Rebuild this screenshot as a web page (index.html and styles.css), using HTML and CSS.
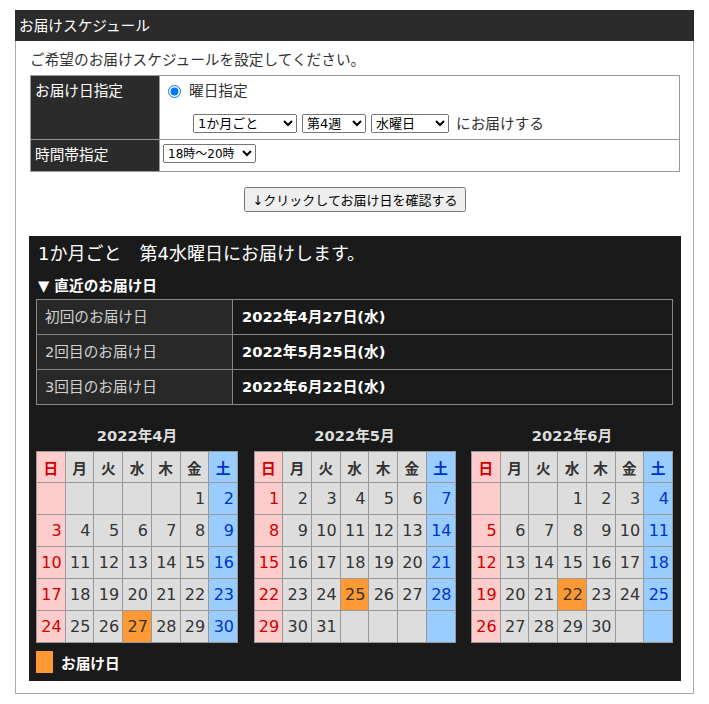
FILE: index.html
```html
<!DOCTYPE html>
<html lang="ja">
<head>
    <meta charset="UTF-8">
    <meta name="viewport" content="width=device-width, initial-scale=1.0">
    <title>お届けスケジュール</title>
    <link rel="stylesheet" href="styles.css">
</head>
<body>
    <div class="schedule">
        <div class="schedule-head">お届けスケジュール</div>
        <div class="schedule-body">
            <p class="lead">ご希望のお届けスケジュールを設定してください。</p>
            <table class="form-table">
                <tr>
                    <th>お届け日指定</th>
                    <td class="first-cell">
                        <label class="radio-line"><input type="radio" name="type" checked>曜日指定</label>
                        <div class="week-line">
                            <select class="sel-cycle"><option>1か月ごと</option></select>
                            <select class="sel-week"><option>第4週</option></select>
                            <select class="sel-day"><option>水曜日</option></select>
                            <span class="week-text">にお届けする</span>
                        </div>
                    </td>
                </tr>
                <tr>
                    <th>時間帯指定</th>
                    <td class="time-cell"><select class="sel-time"><option>18時～20時</option></select></td>
                </tr>
            </table>
            <button class="check-btn">↓クリックしてお届け日を確認する</button>

            <div class="result">
                <h2 class="result-title">1か月ごと　第4水曜日にお届けします。</h2>
                <p class="recent">▼ 直近のお届け日</p>
                <table class="dates-table">
                    <tr><td class="label">初回のお届け日</td><td class="date">2022年4月27日(水)</td></tr>
                    <tr><td class="label">2回目のお届け日</td><td class="date">2022年5月25日(水)</td></tr>
                    <tr><td class="label">3回目のお届け日</td><td class="date">2022年6月22日(水)</td></tr>
                </table>
                <div class="calendars" id="calendars"></div>
                <div class="legend"><span class="legend-mark"></span>お届け日</div>
            </div>
        </div>
    </div>
    <script>
        let months = [
            { year: 2022, month: 4, day: 27 },
            { year: 2022, month: 5, day: 25 },
            { year: 2022, month: 6, day: 22 }
        ];
        let weekNames = ['日','月','火','水','木','金','土'];

        function dayClass(col) {
            if (col === 0) return 'sun';
            if (col === 6) return 'sat';
            return '';
        }

        function buildCalendar(item) {
            const first = new Date(item.year, item.month - 1, 1).getDay();
            const last = new Date(item.year, item.month, 0).getDate();
            let html = '<div class="cal-box"><div class="month-title">' + item.year + '年' + item.month + '月</div>';
            html += '<table class="cal"><tr>';
            weekNames.forEach((name, i) => {
                html += '<th class="' + dayClass(i) + '">' + name + '</th>';
            });
            html += '</tr>';
            const cells = Math.ceil((first + last) / 7) * 7;
            for (let i = 0; i < cells; i++) {
                if (i % 7 === 0) html += '<tr>';
                const day = i - first + 1;
                let cls = dayClass(i % 7);
                if (day === item.day) cls = 'deliv';
                const text = (day >= 1 && day <= last) ? day : '';
                html += '<td class="' + cls + '">' + text + '</td>';
                if (i % 7 === 6) html += '</tr>';
            }
            html += '</table></div>';
            return html;
        }

        document.getElementById('calendars').innerHTML = months.map(buildCalendar).join('');
    </script>
</body>
</html>
```

FILE: styles.css
```css
body {
    margin: 0;
    padding: 10px 15px;
    font-family: "DejaVu Sans", "Noto Sans CJK JP", sans-serif;
    font-size: 11pt;
    color: #333;
    background-color: #fff;
}

.schedule {
    border: 1px solid #aaa;
}

.schedule-head {
    background-color: #2b2b2b;
    color: #fff;
    height: 31px;
    line-height: 31px;
    padding: 0 4px;
    margin: -1px -1px 0 -1px;
}

.schedule-body {
    padding: 8px 13px 12px 14px;
}

.lead {
    margin: 0 0 4px;
    line-height: 22px;
}

/* 入力テーブル */
.form-table {
    width: 100%;
    border-collapse: collapse;
}

.form-table th,
.form-table td {
    border: 1px solid #999;
}

.form-table th {
    width: 124px;
    background-color: #2b2b2b;
    color: #fff;
    font-weight: normal;
    text-align: left;
    vertical-align: top;
    padding: 4px 0 0 4px;
    line-height: 22px;
}

.form-table td {
    padding: 4px 3px;
    line-height: 22px;
}

.form-table .first-cell {
    padding-bottom: 6px;
}

.form-table .time-cell {
    padding: 4px 3px 8px;
}

.radio-line {
    display: flex;
    align-items: center;
}

.radio-line input {
    margin: 0 8px 0 5px;
}

.week-line {
    display: flex;
    align-items: center;
    gap: 5px;
    height: 19px;
    margin-top: 12px;
    padding-left: 30px;
}

.week-text {
    margin-left: 2px;
}

select {
    font-family: "DejaVu Sans", "Noto Sans CJK JP", sans-serif;
    font-size: 13px;
    height: 19px;
    padding: 0;
    color: #000;
}

.sel-cycle { width: 104px; }
.sel-week { width: 64px; }
.sel-day { width: 78px; }
.sel-time { width: 93px; display: block; font-size: 12px; }

.check-btn {
    display: block;
    margin: 15px auto 0;
    height: 25px;
    padding: 0 6px;
    font-family: "DejaVu Sans", "Noto Sans CJK JP", sans-serif;
    font-size: 13px;
}

/* 結果エリア */
.result {
    margin: 24px -1px 0;
    padding: 5px 8px 8px 7px;
    background-color: #1a1a1a;
    color: #fff;
}

.result-title {
    margin: 0;
    padding-left: 2px;
    font-size: 18px;
    font-weight: normal;
    line-height: 26px;
}

.recent {
    margin: 8px 0 2px 2px;
    font-weight: bold;
    line-height: 22px;
}

.dates-table {
    width: 100%;
    border-collapse: collapse;
}

.dates-table td {
    border: 1px solid #888;
    height: 34px;
    padding: 0 8px;
    line-height: 22px;
}

.dates-table .label {
    width: 179px;
    background-color: #282828;
    color: #d0d0d0;
}

.dates-table .date {
    padding-left: 9px;
    font-weight: bold;
}

/* カレンダー */
.calendars {
    display: flex;
    justify-content: space-between;
    margin-top: 20px;
}

.month-title {
    text-align: center;
    font-weight: bold;
    color: #ddd;
    line-height: 22px;
    margin-bottom: 4px;
}

.cal {
    width: 202px;
    border-collapse: collapse;
    table-layout: fixed;
}

.cal th,
.cal td {
    border: 1px solid #999;
    background-color: #ddd;
    color: #333;
    padding: 0;
}

.cal th {
    height: 30px;
    text-align: center;
}

.cal td {
    height: 31px;
    padding-right: 3px;
    text-align: right;
    font-size: 16px;
}

.cal .sun {
    background-color: #fcc;
    color: #c00;
}

.cal .sat {
    background-color: #9cf;
    color: #03c;
}

.cal .deliv {
    background-color: #f93;
}

.legend {
    display: flex;
    align-items: center;
    gap: 8px;
    margin-top: 8px;
    font-weight: bold;
}

.legend-mark {
    width: 17px;
    height: 22px;
    background-color: #f93;
}
```
